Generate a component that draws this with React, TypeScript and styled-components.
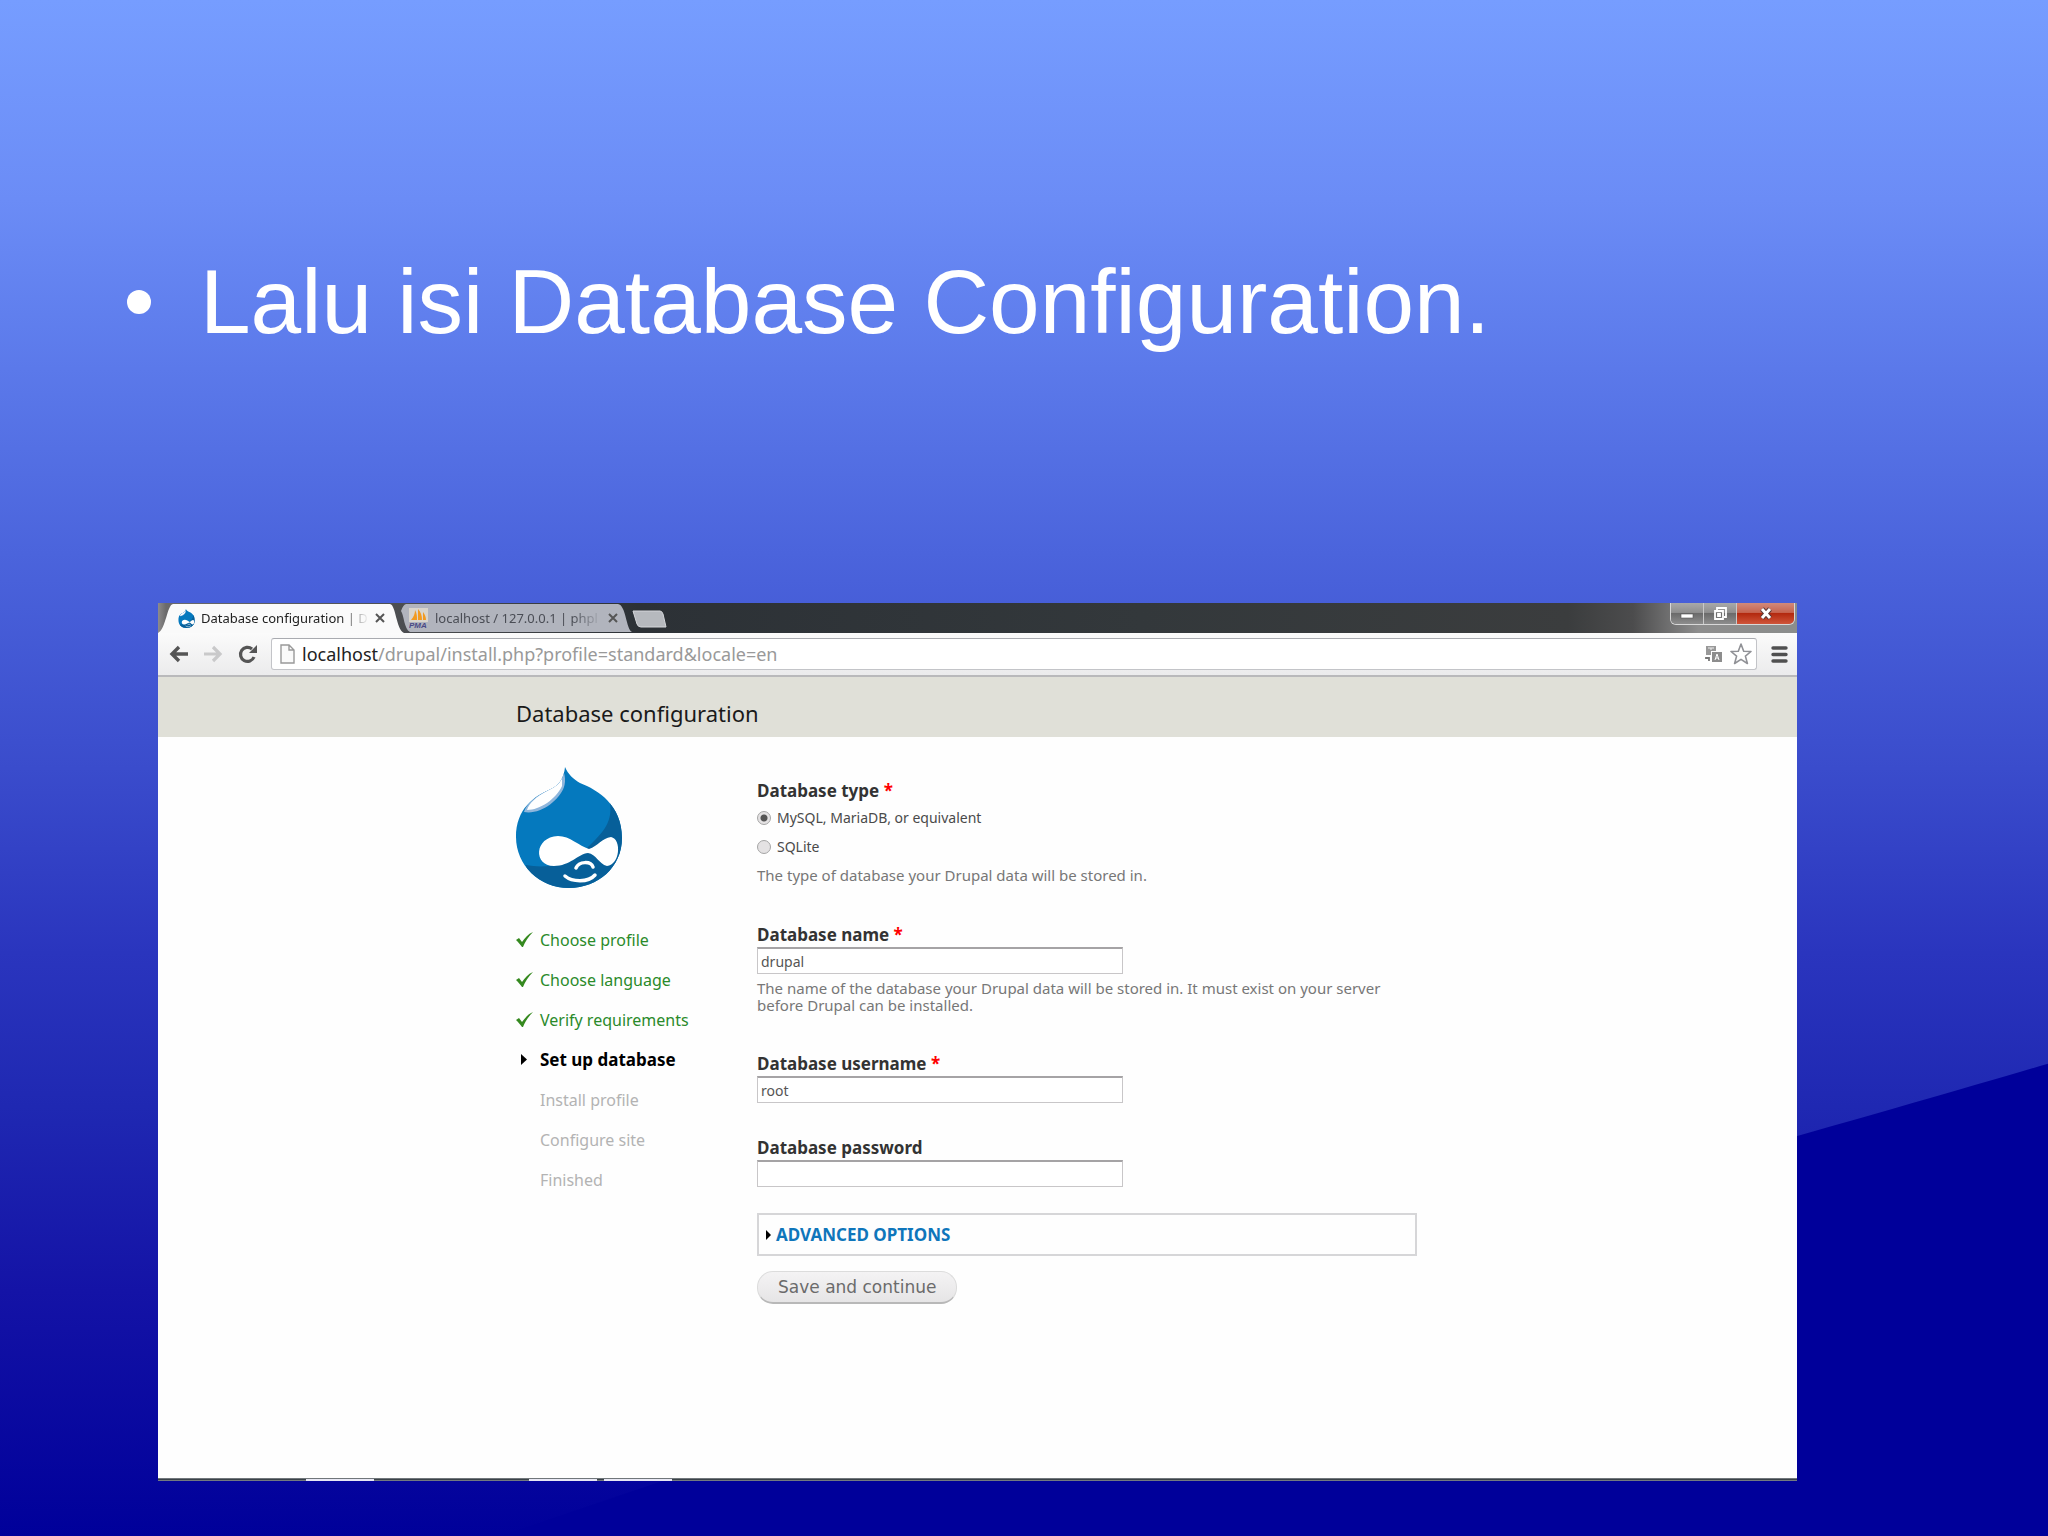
import React from "react";
import styled, { createGlobalStyle, css } from "styled-components";

const Global = createGlobalStyle`
  *, *::before, *::after { box-sizing: border-box; }
  body { margin: 0; background: #00009b; }
  button, input { font: inherit; color: inherit; }
`;

const sans = `"Noto Sans", "Open Sans", sans-serif`;

const Slide = styled.main`
  position: relative;
  min-height: 100vh;
  padding: 246px 251px 56px 127px;
  background: linear-gradient(
    180deg,
    #769dff 0%, #6b8cf6 13%, #5b79ea 24%, #4b64dc 36%, #3a4ccc 50%,
    #2a35be 62%, #1f28b2 72%, #1413a6 84%, #00009a 100%
  );
`;

const Backdrop = styled.svg`
  position: absolute;
  inset: 0;
  width: 100%;
  height: 100%;
`;

const Bullets = styled.ul`
  position: relative;
  margin: 0;
  padding: 0;
  list-style: none;
`;

const Bullet = styled.li`
  display: flex;
  align-items: center;
  gap: 49px;
  font: 91px/112px "Liberation Sans", Arial, sans-serif;
  color: #fff;
  &::before {
    content: "";
    width: 24px;
    height: 24px;
    border-radius: 50%;
    background: #fff;
  }
`;

const Window = styled.section`
  position: relative;
  margin: 245px 0 0 31px;
  background: #fefefe;
`;

const TabStrip = styled.header`
  display: flex;
  height: 30px;
  background: linear-gradient(90deg, #8d8b8c 0, #6b6a6b 8px, #2c3136 480px, #33383b 60%, #3b3d3e 86%, #4c4c4d 90%, #8d8d8d 94%, #8b8d8c 100%);
`;

const Tab = styled.div<{ $active?: boolean }>`
  position: relative;
  display: flex;
  align-items: center;
  gap: 6px;
  width: ${(p) => (p.$active ? 246 : 232)}px;
  margin-left: ${(p) => (p.$active ? 0 : -4)}px;
  padding: 0 ${(p) => (p.$active ? 19 : 14)}px 0 ${(p) => (p.$active ? 20 : 9)}px;
  color: ${(p) => (p.$active ? "#222" : "#4a4d55")};
  font: 13px/28px ${sans};
`;

const TabShape = styled.svg`
  position: absolute;
  inset: 0;
  width: 100%;
  height: 100%;
`;

const TabTitle = styled.span`
  position: relative;
  flex: 1;
  white-space: nowrap;
  mask-image: linear-gradient(90deg, #000 calc(100% - 30px), transparent);
`;

const TabIcon = styled.svg`
  position: relative;
  flex: none;
`;

const PlainButton = styled.button`
  position: relative;
  display: grid;
  place-items: center;
  flex: none;
  padding: 0;
  border: 0;
  background: none;
`;

const WindowButtons = styled.div`
  display: flex;
  margin-left: auto;
  margin-right: 2px;
  height: 22px;
  border: 1px solid #d8d8d8;
  border-top: 0;
  border-radius: 0 0 6px 6px;
  overflow: hidden;
`;

const WindowButton = styled(PlainButton)<{ $close?: boolean }>`
  width: ${(p) => (p.$close ? 57 : 33)}px;
  border-right: ${(p) => (p.$close ? "0" : "1px solid #c9c9c9")};
  background: ${(p) =>
    p.$close
      ? "linear-gradient(180deg, #d08a7b 0%, #c66450 45%, #b3290f 50%, #cf553a 100%)"
      : "linear-gradient(180deg, #a9a9a9 0%, #8f8f8f 45%, #6b6b6b 50%, #8d8d8d 100%)"};
`;

const Toolbar = styled.nav`
  display: flex;
  align-items: center;
  height: 44px;
  padding: 0 9px 0 11px;
  gap: 14px;
  background: linear-gradient(180deg, #fbfbfb, #ebebec);
  border-bottom: 2px solid #b9b9bb;
`;

const Omnibox = styled.div`
  position: relative;
  display: flex;
  align-items: center;
  flex: 1;
  height: 32px;
  padding: 0 4px 0 8px;
  gap: 7px;
  border: 1px solid #c3c4c8;
  border-top-color: #a9abb0;
  border-radius: 3px;
  background: #fff;
`;

const Address = styled.div`
  flex: 1;
  font: 18px/24px ${sans};
  color: #999;
  b { font-weight: 400; color: #222; }
`;

const PageHeader = styled.div`
  height: 60px;
  padding-left: 358px;
  background: #e0e0d8;
`;

const PageTitle = styled.h1`
  margin: 0;
  font: 22px/72px ${sans};
  color: #1a1a1a;
`;

const Page = styled.div`
  display: grid;
  grid-template-columns: 217px 660px;
  column-gap: 24px;
  min-height: 741px;
  padding: 30px 0 0 358px;
`;

const Logo = styled.svg`
  display: block;
  width: 106px;
  height: 121px;
`;

const Tasks = styled.ol`
  margin: 32px 0 0;
  padding: 0;
  list-style: none;
`;

type State = "done" | "active" | "todo";

const taskColors: Record<State, string> = { done: "#2a8a2a", active: "#000", todo: "#b3b3b3" };

const Task = styled.li<{ $state: State }>`
  display: grid;
  grid-template-columns: 24px 1fr;
  align-items: center;
  height: 40px;
  font: ${(p) => (p.$state === "active" ? "700 17px" : "400 16px")}/24px ${sans};
  color: ${(p) => taskColors[p.$state]};
  span { grid-column: 2; }
`;

const Form = styled.form`
  padding-top: 12px;
  color: #3b3b3b;
`;

const Group = styled.fieldset`
  margin: 0;
  padding: 0;
  border: 0;
`;

const labelText = css`
  display: block;
  padding: 0;
  font: 700 17px/24px ${sans};
  color: #333;
`;
const Legend = styled.legend`${labelText}`;
const Label = styled.label`${labelText}`;
const Required = styled.span`color: #f00;`;

const Option = styled.label`
  display: flex;
  align-items: center;
  gap: 6px;
  height: 29px;
  font: 14px/20px ${sans};
  color: #4a4a4a;
`;

const Radio = styled.input`
  appearance: none;
  width: 14px;
  height: 14px;
  margin: 0;
  border: 1px solid #a5a5a5;
  border-radius: 50%;
  background: #e4e2e3;
  &:checked { background: radial-gradient(circle, #555 0 3px, #e4e2e3 4px); }
`;

const Hint = styled.p`
  margin: 6px 0 0;
  font: 15px/17px ${sans};
  color: #777;
`;

const Field = styled.div<{ $gap: number }>`
  margin-top: ${(p) => p.$gap}px;
`;

const TextInput = styled.input`
  display: block;
  width: 366px;
  height: 27px;
  padding: 0 3px;
  border: 1px solid #c8c6c8;
  border-top: 2px solid #a5a3a5;
  background: #fff;
  font: 14px/22px ${sans};
  color: #555;
`;

const Advanced = styled.div`
  display: flex;
  align-items: center;
  height: 43px;
  margin-top: 26px;
  padding-left: 6px;
  border: 2px solid #d6d6d8;
`;

const AdvancedLink = styled.a`
  display: flex;
  align-items: center;
  gap: 5px;
  font: 700 17px/24px ${sans};
  color: #0f76bb;
  text-decoration: none;
`;

const Save = styled.button`
  display: block;
  height: 33px;
  margin-top: 15px;
  padding: 0 20px;
  border: 1px solid #dcdcdc;
  border-bottom: 2px solid #b8b8b8;
  border-radius: 16px;
  background: linear-gradient(180deg, #f4f3f4, #e6e5e6);
  font: 17px/30px "DejaVu Sans", Verdana, sans-serif;
  color: #6b6b6b;
`;

const Taskbar = styled.div`
  height: 3px;
  background:
    linear-gradient(#e8e8f4, #e8e8f4) 148px 1px / 68px 2px no-repeat,
    linear-gradient(#e8e8f4, #e8e8f4) 371px 1px / 68px 2px no-repeat,
    linear-gradient(#e8e8f4, #e8e8f4) 446px 1px / 68px 2px no-repeat,
    linear-gradient(180deg, #8b9094, #3b4348 50%, #8f949c);
`;

const DrupalDrop = ({ id }: { id: string }) => (
  <>
    <defs>
      <clipPath id={id}>
        <path d="M49 0C52 7 57 12 64 16C82 23 106 38 106 71C106 100 82 121 53 121C23 121 0 98 0 70C0 42 18 29 35 22C44 18 48 10 49 0Z" />
      </clipPath>
    </defs>
    <g clipPath={`url(#${id})`}>
      <rect width="106" height="121" fill="#0579be" />
      <path d="M94 36C97 58 84 68 70 82C52 98 30 102 10 98L12 121H106V30Z" fill="#075f99" />
      <path d="M47 3C47 12 40 18 31 23C18 30 10 38 8 45C24 48 43 34 48 20C50 14 49 8 47 3Z" fill="#8fb6dc" />
      <path d="M46 11C44 17 38 20 31 24C20 30 13 36 11 43C24 43 40 32 46 19Z" fill="#fff" />
      <path d="M42 69C54 69 63 79 73 82C82 79 86 71 95 70C106 72 104 98 91 99C83 97 80 87 72 86C62 87 54 99 38 99C17 99 18 70 42 69Z" fill="#fff" />
    </g>
    <path d="M60 101C63 94 75 94 77 100M49 109C56 115 72 116 79 108" fill="none" stroke="#fff" strokeWidth="3.5" strokeLinecap="round" />
  </>
);

const Check = () => (
  <svg width="17" height="16" viewBox="0 0 17 16">
    <path d="M0 8L3 6L6 10C9 6 12 2 17 0C12 5 9 10 7 15H6C4 12 2 10 0 8Z" fill="#35891f" />
  </svg>
);

const Arrow = () => (
  <svg width="12" height="12" viewBox="0 0 12 12"><path d="M5 0L11 5.5L5 11Z" fill="#000" /></svg>
);

const CloseIcon = () => (
  <svg width="10" height="10" viewBox="0 0 10 10"><path d="M1 1L9 9M9 1L1 9" stroke="#555" strokeWidth="2" /></svg>
);

const tasks: { name: string; state: State }[] = [
  { name: "Choose profile", state: "done" },
  { name: "Choose language", state: "done" },
  { name: "Verify requirements", state: "done" },
  { name: "Set up database", state: "active" },
  { name: "Install profile", state: "todo" },
  { name: "Configure site", state: "todo" },
  { name: "Finished", state: "todo" },
];

const Chrome = () => (
  <>
    <TabStrip>
      <Tab $active>
        <TabShape viewBox="0 0 246 30" preserveAspectRatio="none">
          <path d="M0 30C8 26 9 2 15 1H232C238 2 238 26 246 30Z" fill="#fafafa" />
        </TabShape>
        <TabIcon width="17" height="19" viewBox="0 0 106 121"><DrupalDrop id="drop-tab" /></TabIcon>
        <TabTitle>Database configuration | D</TabTitle>
        <PlainButton aria-label="Close tab"><CloseIcon /></PlainButton>
      </Tab>
      <Tab>
        <TabShape viewBox="0 0 232 30" preserveAspectRatio="none">
          <path d="M6 1H218C226 2 226 26 232 29H10C4 26 4 12 1 8Q3 2 6 1Z" fill="#b1b4bd" />
        </TabShape>
        <TabIcon width="20" height="21" viewBox="0 0 20 21">
          <rect width="19" height="14" fill="#d9d5cc" />
          <path d="M2 12C5 9 6 5 6 2C8 5 8 9 8 12ZM9 12V1C12 4 13 8 13 12ZM14 12V4C16 7 17 9 17 12Z" fill="#f29a1f" />
          <text x="0" y="20" fontFamily="Liberation Sans, sans-serif" fontWeight="700" fontStyle="italic" fontSize="8" fill="#4a4a86">PMA</text>
        </TabIcon>
        <TabTitle>localhost / 127.0.0.1 | phpl</TabTitle>
        <PlainButton aria-label="Close tab"><CloseIcon /></PlainButton>
      </Tab>
      <PlainButton aria-label="New tab">
        <svg width="36" height="30" viewBox="0 0 36 30"><path d="M1 8H28Q30 8 31 11L34 24H9Q6 24 5 21Z" fill="#b6b9be" stroke="#d4d6da" /></svg>
      </PlainButton>
      <WindowButtons>
        <WindowButton aria-label="Minimize">
          <svg width="14" height="14" viewBox="0 0 14 14"><rect x="1" y="7" width="12" height="4" fill="#fff" stroke="#555" strokeWidth=".6" /></svg>
        </WindowButton>
        <WindowButton aria-label="Restore">
          <svg width="14" height="14" viewBox="0 0 14 14"><path d="M4 3V1H13V10H11M2 4H10V12H2ZM5 7V9H7V7Z" fill="none" stroke="#fff" strokeWidth="1.8" /></svg>
        </WindowButton>
        <WindowButton $close aria-label="Close">
          <svg width="14" height="14" viewBox="0 0 14 14"><path d="M3 2L11 11M11 2L3 11" stroke="#5b3a38" strokeWidth="5" /><path d="M3 2L11 11M11 2L3 11" stroke="#fff" strokeWidth="3" /></svg>
        </WindowButton>
      </WindowButtons>
    </TabStrip>
    <Toolbar>
      <PlainButton aria-label="Back">
        <svg width="20" height="18" viewBox="0 0 20 18"><path d="M10 2L3 9L10 16M3 9H19" fill="none" stroke="#555" strokeWidth="3.4" /></svg>
      </PlainButton>
      <PlainButton aria-label="Forward">
        <svg width="20" height="18" viewBox="0 0 20 18"><path d="M10 2L17 9L10 16M17 9H1" fill="none" stroke="#c9c9ca" strokeWidth="3.2" /></svg>
      </PlainButton>
      <PlainButton aria-label="Reload">
        <svg width="20" height="20" viewBox="0 0 20 20"><path d="M15 5A7 7 0 1 0 17 13" fill="none" stroke="#555" strokeWidth="3.2" /><path d="M20 1V9H12Z" fill="#555" /></svg>
      </PlainButton>
      <Omnibox>
        <svg width="15" height="20" viewBox="0 0 15 20"><path d="M1 1H9L14 6V19H1ZM9 1V6H14" fill="#fafafa" stroke="#999" strokeWidth="1.4" /></svg>
        <Address><b>localhost</b>/drupal/install.php?profile=standard&amp;locale=en</Address>
        <PlainButton aria-label="Translate">
          <svg width="18" height="18" viewBox="0 0 18 18">
            <path d="M1 1H11V6H6V10H1Z" fill="#999" /><path d="M3 3H9M6 3V5" stroke="#eee" />
            <rect x="7" y="7" width="10" height="10" fill="#8d8d8d" />
            <path d="M10 15L12 9L14 15M11 13H13" fill="none" stroke="#fff" />
            <path d="M1 13H4V16M1 12V14" fill="none" stroke="#777" strokeWidth="1.8" />
          </svg>
        </PlainButton>
        <PlainButton aria-label="Bookmark">
          <svg width="22" height="22" viewBox="0 0 22 22"><path d="M11 1L13.7 8.2L21 8.5L15.4 13.1L17.4 20.5L11 16.4L4.6 20.5L6.6 13.1L1 8.5L8.3 8.2Z" fill="#fff" stroke="#909196" strokeWidth="1.6" strokeLinejoin="round" /></svg>
        </PlainButton>
      </Omnibox>
      <PlainButton aria-label="Menu">
        <svg width="17" height="17" viewBox="0 0 17 17"><path d="M2 2H15M2 8.5H15M2 15H15" stroke="#505050" strokeWidth="3.4" strokeLinecap="round" /></svg>
      </PlainButton>
    </Toolbar>
  </>
);

export default function App() {
  return (
    <Slide>
      <Global />
      <Backdrop viewBox="0 0 2048 1536" preserveAspectRatio="none" aria-hidden="true">
        <path d="M2048 1063C1700 1166 1100 1325 500 1536H2048Z" fill="#00009a" />
      </Backdrop>
      <Bullets><Bullet>Lalu isi Database Configuration.</Bullet></Bullets>
      <Window>
        <Chrome />
        <PageHeader><PageTitle>Database configuration</PageTitle></PageHeader>
        <Page>
          <aside>
            <Logo viewBox="0 0 106 121" role="img" aria-label="Drupal"><DrupalDrop id="drop-logo" /></Logo>
            <Tasks>
              {tasks.map((t) => (
                <Task key={t.name} $state={t.state}>
                  {t.state === "done" && <Check />}
                  {t.state === "active" && <Arrow />}
                  <span>{t.name}</span>
                </Task>
              ))}
            </Tasks>
          </aside>
          <Form onSubmit={(e) => e.preventDefault()}>
            <Group>
              <Legend>Database type <Required>*</Required></Legend>
              <Option><Radio type="radio" name="driver" defaultChecked />MySQL, MariaDB, or equivalent</Option>
              <Option><Radio type="radio" name="driver" />SQLite</Option>
              <Hint>The type of database your Drupal data will be stored in.</Hint>
            </Group>
            <Field $gap={39}>
              <Label htmlFor="db-name">Database name <Required>*</Required></Label>
              <TextInput id="db-name" defaultValue="drupal" />
              <Hint>The name of the database your Drupal data will be stored in. It must exist on your server before Drupal can be installed.</Hint>
            </Field>
            <Field $gap={38}>
              <Label htmlFor="db-user">Database username <Required>*</Required></Label>
              <TextInput id="db-user" defaultValue="root" />
            </Field>
            <Field $gap={33}>
              <Label htmlFor="db-pass">Database password</Label>
              <TextInput id="db-pass" type="password" />
            </Field>
            <Advanced>
              <AdvancedLink href="#advanced">
                <svg width="6" height="10" viewBox="0 0 6 10"><path d="M1 0L6 5L1 10Z" fill="#000" /></svg>
                ADVANCED OPTIONS
              </AdvancedLink>
            </Advanced>
            <Save type="submit">Save and continue</Save>
          </Form>
        </Page>
        <Taskbar />
      </Window>
    </Slide>
  );
}
